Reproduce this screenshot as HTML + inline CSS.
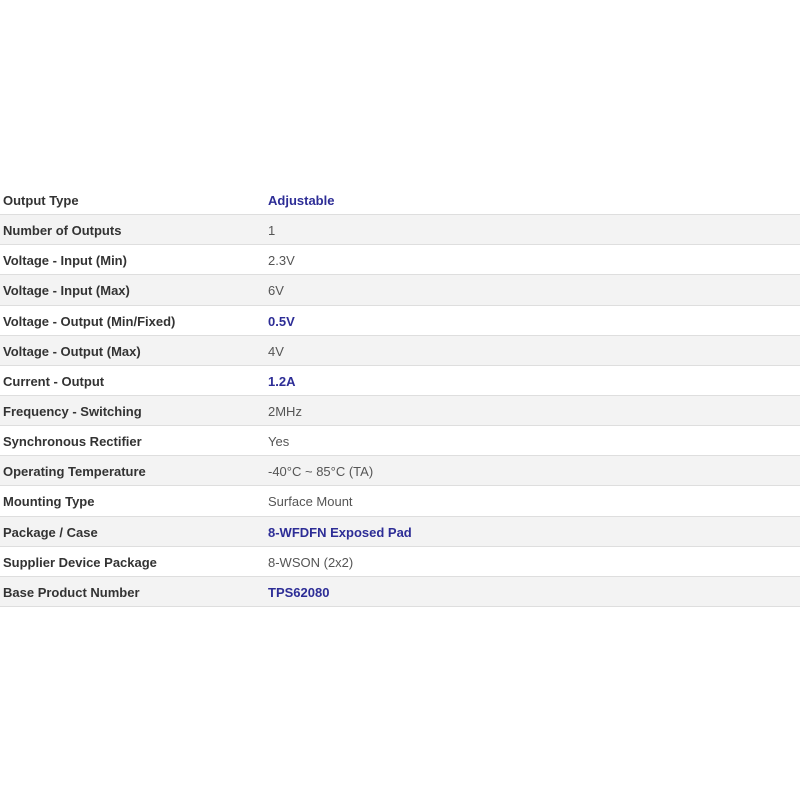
<!DOCTYPE html>
<html><head><style>
body{margin:0;background:#fff;width:800px;height:800px;overflow:hidden;font-family:"Liberation Sans",sans-serif;}
.t{position:absolute;top:185px;left:0;width:800px;}
.r{height:29.15px;border-bottom:1px solid #dedede;position:relative;font-size:13px;line-height:32px;}
.r:nth-child(even){background:#f3f3f3;}
.l{position:absolute;left:3px;font-weight:bold;color:#333;}
.v{position:absolute;left:268px;color:#555;}
.b{color:#2d2d96;font-weight:bold;}
</style></head><body>
<div class="t">
<div class="r"><span class="l">Output Type</span><span class="v b">Adjustable</span></div>
<div class="r"><span class="l">Number of Outputs</span><span class="v">1</span></div>
<div class="r"><span class="l">Voltage - Input (Min)</span><span class="v">2.3V</span></div>
<div class="r"><span class="l">Voltage - Input (Max)</span><span class="v">6V</span></div>
<div class="r"><span class="l">Voltage - Output (Min/Fixed)</span><span class="v b">0.5V</span></div>
<div class="r"><span class="l">Voltage - Output (Max)</span><span class="v">4V</span></div>
<div class="r"><span class="l">Current - Output</span><span class="v b">1.2A</span></div>
<div class="r"><span class="l">Frequency - Switching</span><span class="v">2MHz</span></div>
<div class="r"><span class="l">Synchronous Rectifier</span><span class="v">Yes</span></div>
<div class="r"><span class="l">Operating Temperature</span><span class="v">-40°C ~ 85°C (TA)</span></div>
<div class="r"><span class="l">Mounting Type</span><span class="v">Surface Mount</span></div>
<div class="r"><span class="l">Package / Case</span><span class="v b">8-WFDFN Exposed Pad</span></div>
<div class="r"><span class="l">Supplier Device Package</span><span class="v">8-WSON (2x2)</span></div>
<div class="r"><span class="l">Base Product Number</span><span class="v b">TPS62080</span></div>
</div>
</body></html>
